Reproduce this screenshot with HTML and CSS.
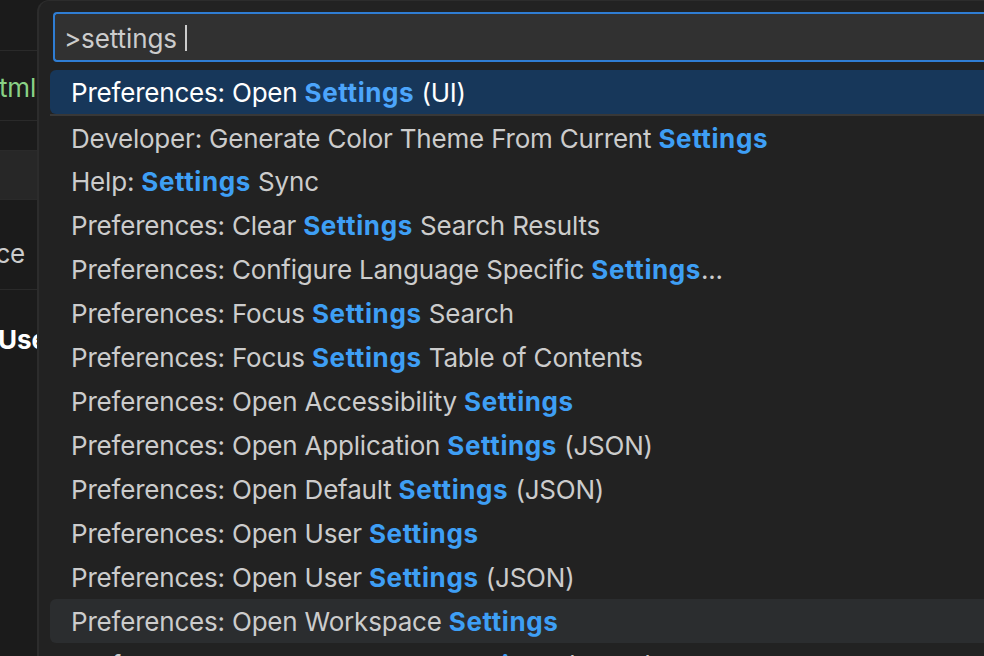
FILE: index.html
```html
<!DOCTYPE html>
<html>
<head>
<meta charset="utf-8">
<link rel="stylesheet" href="styles.css">
</head>
<body>
<div class="app">
  <div class="strip">
    <div class="s-block s-top"></div>
    <div class="s-block s-tab"><span class="s-green">tml</span></div>
    <div class="s-block s-gap"></div>
    <div class="s-block s-band"></div>
    <div class="s-block s-item"><span class="s-text">ce</span></div>
    <div class="s-block s-user"><span class="s-bold">Use</span></div>
  </div>
  <div class="panel">
    <div class="input"><span class="input-text">&gt;settings</span><span class="caret"></span></div>
    <div class="list">
      <div class="row selected">Preferences: Open <b>Settings</b> (UI)</div>
      <div class="row sep">Developer: Generate Color Theme From Current <b>Settings</b></div>
      <div class="row">Help: <b>Settings</b> Sync</div>
      <div class="row">Preferences: Clear <b>Settings</b> Search Results</div>
      <div class="row">Preferences: Configure Language Specific <b>Settings</b>...</div>
      <div class="row">Preferences: Focus <b>Settings</b> Search</div>
      <div class="row">Preferences: Focus <b>Settings</b> Table of Contents</div>
      <div class="row">Preferences: Open Accessibility <b>Settings</b></div>
      <div class="row">Preferences: Open Application <b>Settings</b> (JSON)</div>
      <div class="row">Preferences: Open Default <b>Settings</b> (JSON)</div>
      <div class="row">Preferences: Open User <b>Settings</b></div>
      <div class="row">Preferences: Open User <b>Settings</b> (JSON)</div>
      <div class="row hover">Preferences: Open Workspace <b>Settings</b></div>
      <div class="row">Preferences: Open Workspace <b>Settings</b> (JSON)</div>
    </div>
  </div>
</div>
</body>
</html>
```
FILE: styles.css
```css
html, body {
  margin: 0;
  padding: 0;
  width: 984px;
  height: 656px;
  overflow: hidden;
  background: #1b1b1b;
  font-family: Inter, "Noto Sans", sans-serif;
}
.app {
  display: flex;
  width: 984px;
  height: 656px;
}
.strip {
  width: 37px;
  flex: none;
  background: #1b1b1b;
  overflow: hidden;
  display: flex;
  flex-direction: column;
}
.s-block {
  border-bottom: 1px solid #2a2a2a;
  display: flex;
  align-items: center;
  white-space: nowrap;
  overflow: hidden;
  flex: none;
  box-sizing: border-box;
}
.s-top { height: 51px; }
.s-tab { height: 70px; justify-content: flex-end; padding-right: 1px; padding-top: 4px; }
.s-gap { height: 29px; border-bottom: none; }
.s-band { height: 50px; background: #272727; border-top: 1px solid #2a2a2a; border-bottom: 1px solid #2a2a2a; }
.s-item { height: 90px; justify-content: flex-end; padding-right: 12px; padding-top: 18px; }
.s-user { height: 100px; border-bottom: none; align-items: flex-start; padding-top: 34px; }
.s-green { color: #89d185; font-size: 26px; letter-spacing: -0.2px; }
.s-text { color: #cccccc; font-size: 26px; letter-spacing: -0.2px; }
.s-bold { color: #ffffff; font-size: 26px; font-weight: 700; margin-left: -2px; }

.panel {
  flex: 1;
  min-width: 0;
  background: #222222;
  border-left: 2px solid #2c2c2c;
  border-top: 1px solid #2c2c2c;
  border-top-left-radius: 12px;
  padding: 11px 0 0 11px;
  overflow: hidden;
  box-sizing: border-box;
}
.input {
  margin-left: 3px;
  height: 50px;
  box-sizing: border-box;
  border: 2px solid #2f7dd3;
  border-right: none;
  border-radius: 4px 0 0 4px;
  background: #313131;
  display: flex;
  align-items: center;
  padding-left: 9px;
  padding-top: 2px;
  color: #cccccc;
  font-size: 26px;
  letter-spacing: -0.1px;
  white-space: nowrap;
}
.caret {
  display: inline-block;
  width: 2px;
  height: 26px;
  background: #cccccc;
  margin-left: 8px;
}
.list {
  margin-top: 8px;
}
.row {
  height: 44px;
  line-height: 43px;
  padding-top: 1px;
  padding-left: 21px;
  color: #cccccc;
  font-size: 26px;
  letter-spacing: -0.2px;
  white-space: nowrap;
  border-radius: 6px 0 0 6px;
  box-sizing: border-box;
}
.row b {
  color: #3e9ff5;
  font-weight: 700;
  letter-spacing: 0.6px;
}
.row.selected {
  background: #17375a;
  color: #ffffff;
  height: 44px;
  line-height: 43px;
  padding-top: 1px;
}
.row.selected b { color: #4ca5fb; }
.row.sep {
  border-top: 2px solid #383838;
  border-radius: 0;
  height: 45px;
  padding-top: 3px;
  line-height: 40px;
}
.row.hover {
  background: #2b2d2f;
}
```
